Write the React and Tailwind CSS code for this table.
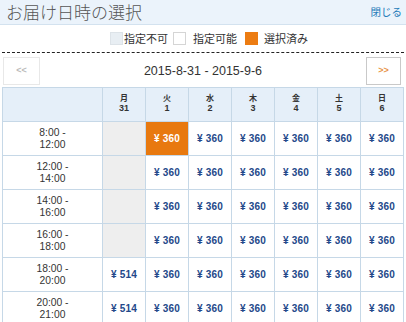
import React from "react";

const days = [
  ["月", "31"],
  ["火", "1"],
  ["水", "2"],
  ["木", "3"],
  ["金", "4"],
  ["土", "5"],
  ["日", "6"],
];

const rows = [
  ["8:00 -", "12:00"],
  ["12:00 -", "14:00"],
  ["14:00 -", "16:00"],
  ["16:00 -", "18:00"],
  ["18:00 -", "20:00"],
  ["20:00 -", "21:00"],
];

const jp = { fontFamily: '"Noto Sans CJK JP", "Noto Sans", sans-serif' };
const lat = { fontFamily: '"Liberation Sans", Arial, "Noto Sans CJK JP", sans-serif' };

function Cell({ ri, di }) {
  const base = "border border-[#c6d8e7] text-center align-middle text-[10px] font-bold tracking-[0.2px]";
  if (di === 0 && ri < 4) {
    return <td className={`${base} bg-[#eeeeee]`}></td>;
  }
  if (di === 1 && ri === 0) {
    return (
      <td className={`${base} bg-[#e8790f] text-white`}>¥ 360</td>
    );
  }
  const price = di === 0 ? "¥ 514" : "¥ 360";
  return <td className={`${base} bg-white text-[#23488a]`}>{price}</td>;
}

export default function App() {
  return (
    <div className="w-[406px] h-[322px] overflow-hidden bg-white" style={lat}>
      <div className="h-[25px] bg-[#ebf3fb] border-b border-[#d3e2ef] flex items-center justify-between">
        <span className="pl-[6px] text-[17px] leading-[24px] font-light text-[#555555]" style={jp}>
          お届け日時の選択
        </span>
        <span className="pr-[4px] text-[10.5px] leading-[12px] text-[#1c7ab8]" style={jp}>
          閉じる
        </span>
      </div>

      <div className="h-[27px] flex items-center pl-[110px] text-[11px] text-[#333]" style={jp}>
        <span className="w-[13px] h-[13px] bg-[#e8eef3] border border-[#dde3e8]"></span>
        <span className="ml-[1px] leading-[13px]">指定不可</span>
        <span className="ml-[5px] w-[13px] h-[13px] bg-white border border-[#d5d5d5]"></span>
        <span className="ml-[7px] leading-[13px]">指定可能</span>
        <span className="ml-[8px] w-[13px] h-[13px] bg-[#ec7c12]"></span>
        <span className="ml-[6px] leading-[13px]">選択済み</span>
      </div>

      <div className="mx-[2px] border-t border-dashed border-[#222]"></div>

      <div className="mt-[4px] flex items-center px-[3px] h-[28px]">
        <div className="w-[37px] h-[28px] border border-[#e8e8e8] flex items-center justify-center text-[9px] text-[#bbbbbb] font-bold">
          &lt;&lt;
        </div>
        <div className="flex-1 text-center text-[12.5px] text-[#333] pt-[1px]">
          2015-8-31 - 2015-9-6
        </div>
        <div className="mr-[2px] w-[35px] h-[28px] border border-[#c9c9c9] flex items-center justify-center text-[9px] text-[#e8954a] font-bold">
          &gt;&gt;
        </div>
      </div>

      <table className="mt-[2px] ml-[2px] w-[402px] table-fixed border-collapse">
        <colgroup>
          <col className="w-[100px]" />
          <col />
          <col />
          <col />
          <col />
          <col />
          <col />
          <col />
        </colgroup>
        <thead>
          <tr className="h-[34px] bg-[#e5eff9]">
            <th className="border border-[#c6d8e7]"></th>
            {days.map(([d, n]) => (
              <th
                key={d}
                className="border border-[#c6d8e7] text-center align-middle text-[9px] leading-[10px] font-bold text-[#333] pb-[4px]"
              >
                <div style={jp} className="text-[8px]">{d}</div>
                <div>{n}</div>
              </th>
            ))}
          </tr>
        </thead>
        <tbody>
          {rows.map(([a, b], ri) => (
            <tr key={ri} className="h-[34px]">
              <td className="border border-[#c6d8e7] text-center align-middle text-[10.3px] leading-[11.5px] text-[#333]">
                {a}
                <br />
                {b}
              </td>
              {days.map((_, di) => (
                <Cell key={di} ri={ri} di={di} />
              ))}
            </tr>
          ))}
        </tbody>
      </table>
    </div>
  );
}
